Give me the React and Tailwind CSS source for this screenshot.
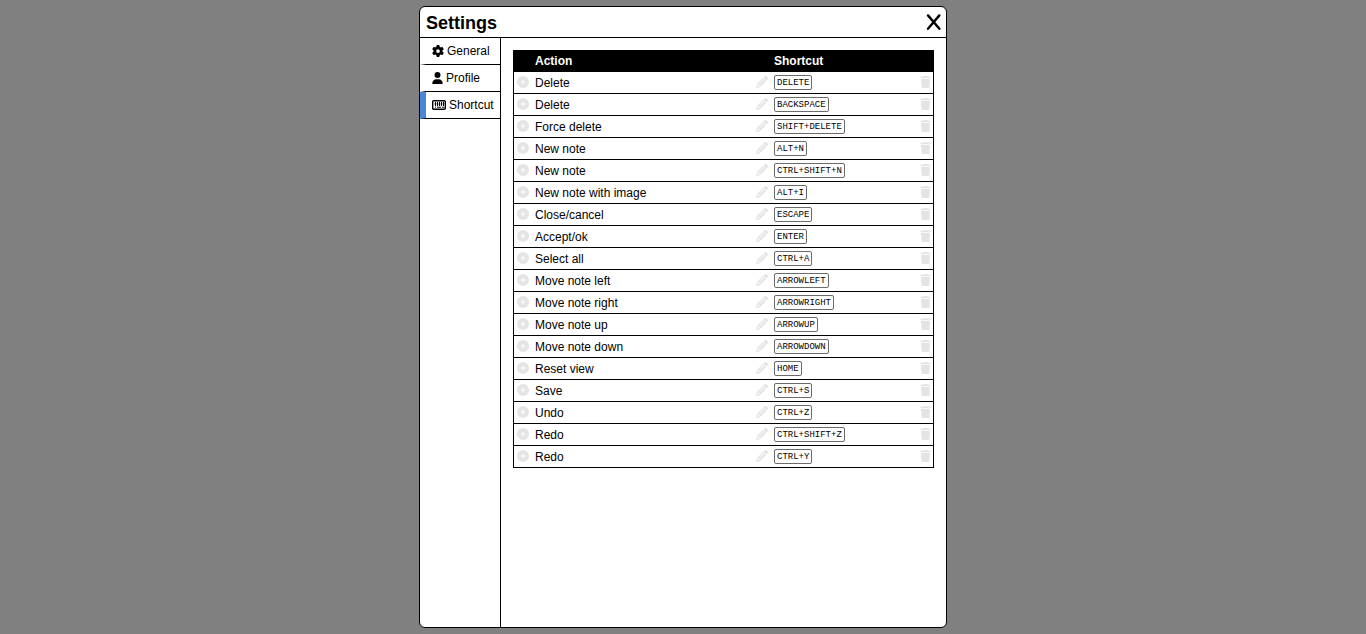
import { useState } from 'react';
import { FaGear, FaUser, FaCirclePlus, FaPencil, FaTrash } from 'react-icons/fa6';

function KeyboardIcon({ className }) {
  return (
    <svg viewBox="0 0 14 12" className={className} fill="none" stroke="currentColor" aria-hidden="true">
      <rect x="0.7" y="1.7" width="12.6" height="8.6" rx="1" strokeWidth="1.4" />
      <path d="M3.5 3v4M5.5 3v4M7.5 3v4M9.5 3v4M11.5 3v4" strokeWidth="1" />
      <path d="M2 5h10" strokeWidth="0.5" />
      <path d="M3 8.2h1M5 8.2h4M10 8.2h2" strokeWidth="1" />
    </svg>
  );
}

const tabs = [
  { name: 'General', Icon: FaGear, size: 'size-3' },
  { name: 'Profile', Icon: FaUser, size: 'h-3 w-[11px]' },
  { name: 'Shortcut', Icon: KeyboardIcon, size: 'h-3 w-3.5' },
];

const shortcuts = [
  ['Delete', 'DELETE'],
  ['Delete', 'BACKSPACE'],
  ['Force delete', 'SHIFT+DELETE'],
  ['New note', 'ALT+N'],
  ['New note', 'CTRL+SHIFT+N'],
  ['New note with image', 'ALT+I'],
  ['Close/cancel', 'ESCAPE'],
  ['Accept/ok', 'ENTER'],
  ['Select all', 'CTRL+A'],
  ['Move note left', 'ARROWLEFT'],
  ['Move note right', 'ARROWRIGHT'],
  ['Move note up', 'ARROWUP'],
  ['Move note down', 'ARROWDOWN'],
  ['Reset view', 'HOME'],
  ['Save', 'CTRL+S'],
  ['Undo', 'CTRL+Z'],
  ['Redo', 'CTRL+SHIFT+Z'],
  ['Redo', 'CTRL+Y'],
];

function IconButton({ label, children }) {
  return (
    <button type="button" aria-label={label} className="block cursor-pointer pb-0.5 opacity-10 hover:opacity-100">
      {children}
    </button>
  );
}

function Tab({ name, Icon, size, active, onSelect }) {
  return (
    <button
      type="button"
      onClick={onSelect}
      className={`flex h-[27px] w-full items-center gap-[3px] border-b border-l-6 border-b-black pl-1.5 whitespace-nowrap ${
        active ? 'border-l-[#4a86d8]' : 'border-l-transparent'
      }`}
    >
      <Icon className={size} />
      {name}
    </button>
  );
}

function ShortcutTable() {
  return (
    <table className="w-full table-fixed border-separate border-spacing-0 border-x border-black text-left">
      <colgroup>
        <col className="w-[18px]" />
        <col />
        <col className="w-[18px]" />
        <col className="w-[146px]" />
        <col className="w-4" />
      </colgroup>
      <thead className="bg-black text-white">
        <tr className="h-[22px]">
          <td />
          <th className="pl-[3px]">Action</th>
          <td />
          <th className="pl-[3px]">Shortcut</th>
          <td />
        </tr>
      </thead>
      <tbody>
        {shortcuts.map(([action, keys]) => (
          <tr key={keys} className="h-[22px] *:border-b *:border-black">
            <td className="pl-[3px]">
              <IconButton label={`Add shortcut for ${action}`}>
                <FaCirclePlus className="size-3" />
              </IconButton>
            </td>
            <td className="pl-[3px]">{action}</td>
            <td className="pl-[3px]">
              <IconButton label={`Edit ${keys}`}>
                <FaPencil className="size-3" />
              </IconButton>
            </td>
            <td className="pl-[3px]">
              <kbd className="block w-fit rounded-xs border border-[#6b6b6b] px-0.5 pt-px font-['Liberation_Mono',monospace] text-[9px] leading-3">
                {keys}
              </kbd>
            </td>
            <td className="pl-[3px]">
              <IconButton label={`Remove ${keys}`}>
                <FaTrash className="h-3 w-[11px]" />
              </IconButton>
            </td>
          </tr>
        ))}
      </tbody>
    </table>
  );
}

export default function App() {
  const [active, setActive] = useState('Shortcut');
  return (
    <div className="flex h-screen justify-center bg-[#808080] py-1.5 font-['Liberation_Sans',Arial,sans-serif] text-xs text-black">
      <section
        role="dialog"
        aria-labelledby="settings-title"
        className="flex w-full max-w-[528px] flex-col overflow-hidden rounded-md border border-black bg-white"
      >
        <header className="flex h-[31px] shrink-0 items-center justify-between border-b border-black pr-1 pl-1.5">
          <h1 id="settings-title" className="pt-0.5 text-lg font-bold">Settings</h1>
          <button type="button" aria-label="Close" className="cursor-pointer">
            <svg viewBox="0 0 16 18" className="h-[18px] w-4" fill="none" stroke="currentColor" strokeWidth="2.4" strokeLinecap="round">
              <path d="M2 2.4 13.4 15.8M13.4 2.4 2 15.8" />
            </svg>
          </button>
        </header>
        <div className="flex min-h-0 flex-1">
          <nav className="w-[81px] shrink-0 border-r border-black">
            {tabs.map((tab) => (
              <Tab key={tab.name} {...tab} active={tab.name === active} onSelect={() => setActive(tab.name)} />
            ))}
          </nav>
          <main className="min-w-0 flex-1 overflow-auto p-3">{active === 'Shortcut' && <ShortcutTable />}</main>
        </div>
      </section>
    </div>
  );
}
